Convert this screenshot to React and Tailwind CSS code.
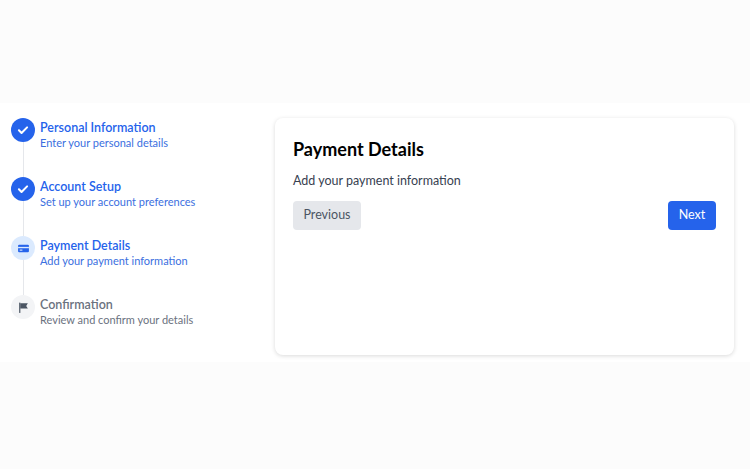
const F = { fontFamily: 'Lato,"Noto Sans",sans-serif' };

function Check() {
  return (
    <svg width="14" height="14" viewBox="0 0 24 24" fill="none" stroke="white" strokeWidth="3.5" strokeLinecap="round" strokeLinejoin="round"><path d="M5 12.5l4.5 4.5L19 7.5" /></svg>
  );
}
function Card() {
  return (
    <svg width="13" height="13" viewBox="0 0 24 24" fill="#2563eb"><rect x="2" y="5" width="20" height="14" rx="2" /><rect x="2" y="9" width="20" height="2.5" fill="#dbeafe" /><rect x="5" y="14" width="5" height="2" fill="#dbeafe" /></svg>
  );
}
function Flag() {
  return (
    <svg width="13" height="13" viewBox="0 0 24 24" fill="#4b5563"><rect x="4" y="3" width="2.2" height="19" /><path d="M6 4h14l-3 5 3 5H6z" /></svg>
  );
}

const steps = [
  { t: "Personal Information", d: "Enter your personal details", s: "done" },
  { t: "Account Setup", d: "Set up your account preferences", s: "done" },
  { t: "Payment Details", d: "Add your payment information", s: "cur" },
  { t: "Confirmation", d: "Review and confirm your details", s: "todo" },
];

export default function App() {
  return (
    <div className="w-[750px] h-[469px] bg-[#fcfcfc] pt-[103px]" style={F}>
      <div className="bg-white h-[259px] flex">
        <div className="w-[275px] pl-[11px] pt-[15px]">
          {steps.map((s, i) => (
            <div key={i} className="flex gap-[5px] h-[59px]">
              <div className="flex flex-col items-center w-[24px]">
                <div className={`w-[24px] h-[24px] rounded-full flex items-center justify-center shrink-0 ${s.s === "done" ? "bg-[#2563eb]" : s.s === "cur" ? "bg-[#dbeafe]" : "bg-[#f3f4f6]"}`}>
                  {s.s === "done" ? <Check /> : s.s === "cur" ? <Card /> : <Flag />}
                </div>
                {i < 3 && <div className="w-px flex-1 bg-[#e5e7eb]" />}
              </div>
              <div className="mt-[2px]">
                <div className={`text-[12.5px] font-semibold leading-[16px] ${s.s === "todo" ? "text-[#6b7280]" : "text-[#2563eb]"}`}>{s.t}</div>
                <div className={`text-[11px] leading-[14px] ${s.s === "todo" ? "text-[#6b7280]" : "text-[#3b6fe0]"}`}>{s.d}</div>
              </div>
            </div>
          ))}
        </div>
        <div className="mt-[15px] w-[459px] h-[237px] bg-white rounded-lg shadow-[0_1px_4px_rgba(0,0,0,0.15)] px-[18px] pt-[19px]">
          <h2 className="text-[18px] font-bold text-black leading-[24px]">Payment Details</h2>
          <p className="mt-[12px] text-[12.5px] text-[#374151] leading-[16px]">Add your payment information</p>
          <div className="mt-[12px] flex justify-between">
            <button className="h-[29px] w-[68px] rounded bg-[#e5e7eb] text-[12.5px] text-[#4b5563]">Previous</button>
            <button className="h-[29px] w-[48px] rounded bg-[#2563eb] text-[12.5px] text-white">Next</button>
          </div>
        </div>
      </div>
    </div>
  );
}
